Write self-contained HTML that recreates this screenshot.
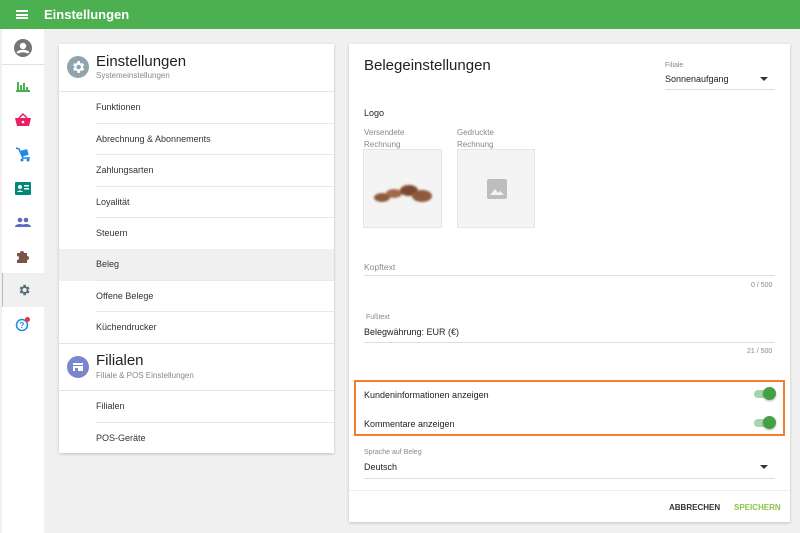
<!DOCTYPE html>
<html><head><meta charset="utf-8">
<style>
*{box-sizing:border-box;margin:0;padding:0}
body{width:800px;height:533px;overflow:hidden;background:#f0f0f0;font-family:"Liberation Sans",sans-serif;position:relative;color:#222}
.top{position:absolute;left:0;top:0;width:800px;height:29px;background:#4caf50;color:#fff}
.top .t{position:absolute;left:44px;top:7px;font-size:13px;font-weight:bold}
.ham{position:absolute;left:16px;top:10px;width:12px;height:9px;border-top:2px solid #fff;border-bottom:2px solid #fff}
.ham:after{content:"";position:absolute;left:0;top:1.5px;width:12px;height:2px;background:#fff}
.rail{position:absolute;left:2px;top:29px;width:42px;height:504px;background:#fff}
.ri{position:absolute;left:0;width:42px;height:34px;display:flex;align-items:center;justify-content:center}
.card{position:absolute;background:#fff;box-shadow:0 1px 3px rgba(0,0,0,.2)}
.item{position:absolute;left:37px;right:0;font-size:9px;color:#333;border-bottom:1px solid #e8e8e8;height:31.5px;line-height:31px}
.hd{position:absolute;left:0;right:0}
.circ{position:absolute;left:8px;width:22px;height:22px;border-radius:50%}
.h1{position:absolute;left:37px;font-size:15px;color:#222}
.h2{position:absolute;left:37px;font-size:8px;color:#888}
.lbl{position:absolute;font-size:8px;color:#888}
.txt{position:absolute;font-size:9px;color:#222}
.line{position:absolute;height:1px;background:#ddd}
.sw{position:absolute;left:752px;width:24px;height:14px}
.sw .tr{position:absolute;left:2px;top:3px;width:20px;height:8px;border-radius:4px;background:#a5d6a7}
.sw .th{position:absolute;right:0;top:0;width:13px;height:13px;border-radius:50%;background:#43a047;box-shadow:0 1px 2px rgba(0,0,0,.3)}
.arrow{position:absolute;width:0;height:0;border-left:4px solid transparent;border-right:4px solid transparent;border-top:4px solid #333}
</style></head><body>
<div class="top"><div class="ham"></div><div class="t">Einstellungen</div></div>
<div class="rail">
 <div class="ri" style="top:2px;height:34px;border-bottom:1px solid #e0e0e0"><svg width="20" height="20" viewBox="0 0 20 20"><circle cx="10" cy="10" r="9" fill="#757575"/><circle cx="10" cy="8" r="3.2" fill="#fff"/><path d="M4.5 15c1.5-2.5 9.5-2.5 11 0" stroke="#fff" stroke-width="2.4" fill="none"/></svg></div>
 <div class="ri" style="top:40px"><svg width="14" height="12"><rect x="1" y="2" width="2" height="9" fill="#4caf50"/><rect x="4" y="5" width="2" height="6" fill="#4caf50"/><rect x="7" y="3" width="2" height="8" fill="#4caf50"/><rect x="10" y="7" width="2" height="4" fill="#4caf50"/><rect x="0" y="10" width="14" height="2" fill="#4caf50"/></svg></div>
 <div class="ri" style="top:74px"><svg width="16" height="14"><path d="M0 5h16l-2 8H2z" fill="#e91e63"/><path d="M4 5l4-4 4 4" stroke="#e91e63" stroke-width="1.5" fill="none"/><circle cx="8" cy="9" r="1.3" fill="#fff"/></svg></div>
 <div class="ri" style="top:108px"><svg width="16" height="16"><path d="M1 2l3 1 4 9h7" stroke="#1e88e5" stroke-width="1.6" fill="none"/><rect x="6" y="4" width="7" height="6" fill="#1e88e5" transform="rotate(-15 9 7)"/><circle cx="7" cy="14" r="1.5" fill="#1e88e5"/><circle cx="13" cy="14" r="1.5" fill="#1e88e5"/></svg></div>
 <div class="ri" style="top:142px"><svg width="16" height="13"><rect width="16" height="13" rx="1" fill="#00897b"/><circle cx="5" cy="5" r="2" fill="#fff"/><path d="M2 10c1-2 5-2 6 0z" fill="#fff"/><rect x="9" y="3" width="5" height="1.5" fill="#fff"/><rect x="9" y="6" width="5" height="1.5" fill="#fff"/></svg></div>
 <div class="ri" style="top:176px"><svg width="16" height="10"><circle cx="5" cy="3" r="2.3" fill="#5c6bc0"/><circle cx="11" cy="3" r="2.3" fill="#5c6bc0"/><path d="M0 10c0-4 10-4 10 0zM6 10c0-4 10-4 10 0z" fill="#5c6bc0"/></svg></div>
 <div class="ri" style="top:210px"><svg width="14" height="14"><path d="M1 4h3a2 2 0 1 1 4 0h3v3a2 2 0 1 1 0 4v3H1v-3a2 2 0 1 0 0-4z" fill="#795548"/></svg></div>
 <div class="ri" style="top:244px;background:#f0f0f0;border-left:1px solid #bbb"><svg width="14" height="14" viewBox="0 0 24 24"><path fill="#546e7a" d="M19.4 13a7 7 0 0 0 0-2l2.1-1.6-2-3.5-2.5 1a7 7 0 0 0-1.7-1L15 3h-4l-.4 2.9a7 7 0 0 0-1.7 1l-2.5-1-2 3.5L6.6 11a7 7 0 0 0 0 2l-2.1 1.6 2 3.5 2.5-1a7 7 0 0 0 1.7 1L11 21h4l.4-2.9a7 7 0 0 0 1.7-1l2.5 1 2-3.5zM13 15.5a3.5 3.5 0 1 1 0-7 3.5 3.5 0 0 1 0 7z"/></svg></div>
 <div class="ri" style="top:278px"><svg width="16" height="16"><circle cx="7" cy="9" r="5.5" stroke="#1e88e5" stroke-width="1.5" fill="none"/><text x="4.5" y="12" font-size="8" fill="#1e88e5" font-family="Liberation Sans" font-weight="bold">?</text><circle cx="12.5" cy="3.5" r="2.5" fill="#e53935"/></svg></div>
</div>

<div class="card" style="left:59px;top:44px;width:275px;height:409px">
 <div class="hd" style="top:0;height:48px;border-bottom:1px solid #e5e5e5">
  <div class="circ" style="top:12px;background:#90a4ae"><svg width="22" height="22" viewBox="-5 -5 34 34"><path fill="#fff" d="M19.4 13a7 7 0 0 0 0-2l2.1-1.6-2-3.5-2.5 1a7 7 0 0 0-1.7-1L15 3h-4l-.4 2.9a7 7 0 0 0-1.7 1l-2.5-1-2 3.5L6.6 11a7 7 0 0 0 0 2l-2.1 1.6 2 3.5 2.5-1a7 7 0 0 0 1.7 1L11 21h4l.4-2.9a7 7 0 0 0 1.7-1l2.5 1 2-3.5zM13 15.5a3.5 3.5 0 1 1 0-7 3.5 3.5 0 0 1 0 7z"/></svg></div>
  <div class="h1" style="top:9px">Einstellungen</div>
  <div class="h2" style="top:27px">Systemeinstellungen</div>
 </div>
 <div class="item" style="top:48px">Funktionen</div>
 <div class="item" style="top:79.5px">Abrechnung &amp; Abonnements</div>
 <div class="item" style="top:111px">Zahlungsarten</div>
 <div class="item" style="top:142.5px">Loyalität</div>
 <div class="item" style="top:174px">Steuern</div>
 <div style="position:absolute;left:0;right:0;top:205px;height:31.5px;background:#f0f0f0"></div>
 <div class="item" style="top:205px">Beleg</div>
 <div class="item" style="top:236.5px">Offene Belege</div>
 <div class="item" style="top:268px;border-bottom:none">Küchendrucker</div>
 <div class="hd" style="top:299px;height:48px;border-top:1px solid #e5e5e5;border-bottom:1px solid #e5e5e5">
  <div class="circ" style="top:12px;background:#7986cb"><svg width="22" height="22"><rect x="6" y="7" width="10" height="2" fill="#fff"/><rect x="6" y="10" width="10" height="5" fill="#fff"/><rect x="8" y="12" width="3" height="3" fill="#7986cb"/></svg></div>
  <div class="h1" style="top:8px">Filialen</div>
  <div class="h2" style="top:27px">Filiale &amp; POS Einstellungen</div>
 </div>
 <div class="item" style="top:347px">Filialen</div>
 <div class="item" style="top:378.5px;border-bottom:none">POS-Geräte</div>
</div>

<div class="card" style="left:349px;top:44px;width:441px;height:478px"></div>
<div class="txt" style="left:364px;top:57px;font-size:15px">Belegeinstellungen</div>
<div class="lbl" style="left:665px;top:62px;font-size:7px">Filiale</div>
<div class="txt" style="left:665px;top:74px">Sonnenaufgang</div>
<div class="arrow" style="left:760px;top:77px"></div>
<div class="line" style="left:665px;top:89px;width:110px"></div>
<div class="txt" style="left:364px;top:108px">Logo</div>
<div class="lbl" style="left:364px;top:127px;line-height:12px">Versendete<br>Rechnung</div>
<div class="lbl" style="left:457px;top:127px;line-height:12px">Gedruckte<br>Rechnung</div>
<div style="position:absolute;left:363px;top:149px;width:79px;height:79px;background:#f4f4f4;border:1px solid #e5e5e5;overflow:hidden">
 <div style="position:absolute;left:10px;top:35px;width:60px;height:20px;filter:blur(1px)">
  <div style="position:absolute;left:0;top:8px;width:16px;height:9px;border-radius:50%;background:#8d5a3b"></div>
  <div style="position:absolute;left:12px;top:4px;width:16px;height:9px;border-radius:50%;background:#a06a48"></div>
  <div style="position:absolute;left:26px;top:0;width:18px;height:11px;border-radius:50%;background:#7a4a30"></div>
  <div style="position:absolute;left:38px;top:5px;width:20px;height:12px;border-radius:50%;background:#8d5a3b"></div>
 </div>
</div>
<div style="position:absolute;left:457px;top:149px;width:78px;height:79px;background:#f4f4f4;border:1px solid #e5e5e5">
 <svg style="position:absolute;left:29px;top:29px" width="20" height="20"><rect width="20" height="20" rx="2" fill="#bdbdbd"/><path d="M3 16l5-6 3 4 2-2 4 4z" fill="#f4f4f4"/></svg>
</div>
<div class="lbl" style="left:364px;top:262px;font-size:8.5px">Kopftext</div>
<div class="line" style="left:364px;top:275px;width:411px"></div>
<div class="lbl" style="left:751px;top:282px;font-size:7px">0 / 500</div>
<div class="lbl" style="left:366px;top:314px;font-size:7px">Fußtext</div>
<div class="txt" style="left:364px;top:327px">Belegwährung: EUR (€)</div>
<div class="line" style="left:364px;top:342px;width:411px"></div>
<div class="lbl" style="left:747px;top:348px;font-size:7px">21 / 500</div>
<div style="position:absolute;left:354px;top:380px;width:431px;height:56px;border:2.5px solid #f08030"></div>
<div class="txt" style="left:364px;top:390px">Kundeninformationen anzeigen</div>
<div class="sw" style="top:387px"><div class="tr"></div><div class="th"></div></div>
<div class="txt" style="left:364px;top:419px">Kommentare anzeigen</div>
<div class="sw" style="top:416px"><div class="tr"></div><div class="th"></div></div>
<div class="lbl" style="left:364px;top:449px;font-size:7px">Sprache auf Beleg</div>
<div class="txt" style="left:364px;top:462px">Deutsch</div>
<div class="arrow" style="left:760px;top:465px"></div>
<div class="line" style="left:364px;top:478px;width:411px"></div>
<div class="line" style="left:349px;top:490px;width:441px;background:#eee"></div>
<div class="txt" style="left:669px;top:503px;font-size:8px;font-weight:bold;color:#333">ABBRECHEN</div>
<div class="txt" style="left:734px;top:503px;font-size:8px;font-weight:bold;color:#8bc34a">SPEICHERN</div>
</body></html>
